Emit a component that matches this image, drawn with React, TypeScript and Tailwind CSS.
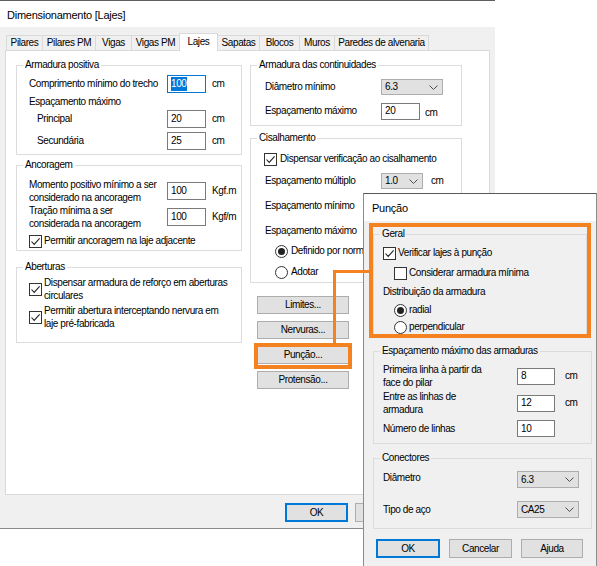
import type { ReactNode } from "react";
import clsx from "clsx";

function Box({ legend, className, children }: { legend: string; className?: string; children: ReactNode }) {
  return (
    <fieldset className={clsx("min-w-0 border border-[#dcdcdc]", className)}>
      <legend className="ml-[6px] px-[2px] leading-[14px]">{legend}</legend>
      {children}
    </fieldset>
  );
}

function Input({ value, w = "w-[39px]", h = "h-[18px]", focused }: { value: string; w?: string; h?: string; focused?: boolean }) {
  return (
    <div className={clsx("flex shrink-0 items-center border bg-white pl-[3px]", w, h, focused ? "border-[#0078d7]" : "border-[#7a7a7a]")}>
      {focused ? <span className="bg-[#0078d7] text-white">{value}</span> : value}
    </div>
  );
}

function Select({ value, w = "w-[62px]", h = "h-[17px]" }: { value: string; w?: string; h?: string }) {
  return (
    <div className={clsx("flex shrink-0 items-center justify-between border border-[#adadad] bg-[#e1e1e1] pl-[3px] pr-[4px]", w, h)}>
      <span>{value}</span>
      <svg width="9" height="5" viewBox="0 0 9 5">
        <path d="M0.5 0.5 L4.5 4.5 L8.5 0.5" fill="none" stroke="#505050" strokeWidth="1" />
      </svg>
    </div>
  );
}

function Check({ checked }: { checked?: boolean }) {
  return (
    <span className="flex h-[13px] w-[13px] shrink-0 items-center justify-center border border-[#333] bg-white">
      {checked && (
        <svg width="11" height="11" viewBox="0 0 11 11">
          <path d="M1.5 5.5 L4.2 8.4 L9.6 2.4" fill="none" stroke="#222" strokeWidth="1.1" />
        </svg>
      )}
    </span>
  );
}

function Radio({ checked }: { checked?: boolean }) {
  return (
    <span className="flex h-[13px] w-[13px] shrink-0 items-center justify-center rounded-full border border-[#333] bg-white">
      {checked && <span className="h-[7px] w-[7px] rounded-full bg-[#222]" />}
    </span>
  );
}

function Button({ label, w = "w-[92px]", h = "h-[18px]", primary }: { label?: string; w?: string; h?: string; primary?: boolean }) {
  return (
    <div
      className={clsx(
        "flex shrink-0 items-center justify-center bg-[#e1e1e1]",
        w,
        h,
        primary ? "border-2 border-[#0078d7]" : "border border-[#adadad]",
      )}
    >
      {label}
    </div>
  );
}

const TABS = [
  { nome: "Pilares", w: "w-[37px]" },
  { nome: "Pilares PM", w: "w-[54px]" },
  { nome: "Vigas", w: "w-[37px]" },
  { nome: "Vigas PM", w: "w-[49px]" },
  { nome: "Lajes", w: "w-[39px]", ativo: true },
  { nome: "Sapatas", w: "w-[43px]" },
  { nome: "Blocos", w: "w-[41px]" },
  { nome: "Muros", w: "w-[36px]" },
  { nome: "Paredes de alvenaria", w: "w-[95px]" },
];

function MainDialog() {
  return (
    <div className="flex h-[529px] w-[495px] flex-col border-b border-[#8a8a8a]">
      <div className="flex h-[27px] shrink-0 items-center border-t border-[#5f5f5f] bg-white pl-[7px] pt-[1px] text-[11px] tracking-[-0.25px]">
        Dimensionamento [Lajes]
      </div>
      <div className="flex flex-1 flex-col bg-[#f0f0f0] px-[5px] pt-[6px] pb-[6px]">
        <div className="flex h-[17px] items-end pl-[1px]">
          {TABS.map((t) => (
            <div
              key={t.nome}
              className={clsx(
                "-ml-px flex items-center justify-center border-x border-t border-[#d9d9d9] first:ml-0",
                t.w,
                t.ativo ? "relative z-10 -mb-px h-[18px] bg-white pb-[2px]" : "h-[15px] bg-[#f0f0f0]",
              )}
            >
              {t.nome}
            </div>
          ))}
        </div>
        <div className="flex h-[445px] gap-[8px] border border-[#d9d9d9] bg-white pl-[10px]">
          <div className="flex w-[226px] flex-col">
            <Box legend="Armadura positiva" className="mt-[7px]">
              <div className="pl-[12px] pt-[3px] pb-[4px]">
                <div className="flex h-[18px] items-center">
                  <span className="w-[138px]">Comprimento mínimo do trecho</span>
                  <Input value="100" focused />
                  <span className="ml-[6px]">cm</span>
                </div>
                <div className="mt-[2px] h-[14px] leading-[14px]">Espaçamento máximo</div>
                <div className="mt-[1px] flex h-[18px] items-center">
                  <span className="w-[138px] pl-[8px]">Principal</span>
                  <Input value="20" />
                  <span className="ml-[6px]">cm</span>
                </div>
                <div className="mt-[4px] flex h-[18px] items-center">
                  <span className="w-[138px] pl-[8px]">Secundária</span>
                  <Input value="25" />
                  <span className="ml-[6px]">cm</span>
                </div>
              </div>
            </Box>
            <Box legend="Ancoragem" className="mt-[3px]">
              <div className="pl-[12px] pt-[6px] pb-[2px]">
                <div className="flex h-[26px] items-center">
                  <span className="w-[138px] leading-[13px]">
                    Momento positivo mínimo a ser
                    <br />
                    considerado na ancoragem
                  </span>
                  <Input value="100" />
                  <span className="ml-[6px]">Kgf.m</span>
                </div>
                <div className="flex h-[26px] items-center">
                  <span className="w-[138px] leading-[13px]">
                    Tração mínima a ser
                    <br />
                    considerada na ancoragem
                  </span>
                  <Input value="100" />
                  <span className="ml-[6px]">Kgf/m</span>
                </div>
                <div className="mt-[4px] flex h-[14px] items-center gap-[2px]">
                  <Check checked />
                  <span>Permitir ancoragem na laje adjacente</span>
                </div>
              </div>
            </Box>
            <Box legend="Aberturas" className="mt-[9px]">
              <div className="pl-[12px] pt-[2px] pb-[12px]">
                <div className="flex h-[26px] items-center gap-[2px]">
                  <Check checked />
                  <span className="leading-[13px]">
                    Dispensar armadura de reforço em aberturas
                    <br />
                    circulares
                  </span>
                </div>
                <div className="mt-[2px] flex h-[26px] items-center gap-[2px]">
                  <Check checked />
                  <span className="leading-[13px]">
                    Permitir abertura interceptando nervura em
                    <br />
                    laje pré-fabricada
                  </span>
                </div>
              </div>
            </Box>
          </div>
          <div className="flex w-[212px] flex-col">
            <Box legend="Armadura das continuidades" className="mt-[7px]">
              <div className="pl-[14px] pt-[6px] pb-[5px]">
                <div className="flex h-[18px] items-center">
                  <span className="w-[116px]">Diâmetro mínimo</span>
                  <Select value="6.3" h="h-[16px]" />
                </div>
                <div className="mt-[6px] flex h-[18px] items-center">
                  <span className="w-[116px]">Espaçamento máximo</span>
                  <Input value="20" h="h-[17px]" />
                  <span className="ml-[5px] pt-[3px]">cm</span>
                </div>
              </div>
            </Box>
            <Box legend="Cisalhamento" className="mt-[5px]">
              <div className="pl-[14px] pt-[7px] pb-[3px]">
                <div className="-ml-px flex h-[14px] items-center gap-[3px]">
                  <Check checked />
                  <span>Dispensar verificação ao cisalhamento</span>
                </div>
                <div className="mt-[6px] flex h-[18px] items-center">
                  <span className="w-[116px]">Espaçamento múltiplo</span>
                  <Select value="1.0" w="w-[42px]" h="h-[16px]" />
                  <span className="ml-[8px]">cm</span>
                </div>
                {/* os campos destas linhas ficam sob a janela Punção */}
                <div className="mt-[7px] flex h-[18px] items-center">
                  <span className="w-[116px]">Espaçamento mínimo</span>
                </div>
                <div className="mt-[7px] flex h-[18px] items-center">
                  <span className="w-[116px]">Espaçamento máximo</span>
                </div>
                <div className="mt-[4px] flex h-[14px] items-center gap-[3px] pl-[10px]">
                  <Radio checked />
                  <span className="whitespace-nowrap">Definido por norma</span>
                </div>
                <div className="mt-[7px] flex h-[14px] items-center gap-[3px] pl-[10px]">
                  <Radio />
                  <span>Adotar</span>
                </div>
              </div>
            </Box>
            <div className="ml-[7px] mt-[13px] flex flex-col gap-[7px]">
              <Button label="Limites..." />
              <Button label="Nervuras..." />
              <Button label="Punção..." />
              <Button label="Protensão..." />
            </div>
          </div>
        </div>
        <div className="mt-[8px] flex justify-end gap-[7px] pr-[2px]">
          <Button label="OK" w="w-[63px]" h="h-[19px]" primary />
          <Button w="w-[63px]" h="h-[19px]" />
          <Button w="w-[63px]" h="h-[19px]" />
        </div>
      </div>
    </div>
  );
}

function PuncaoDialog() {
  return (
    <div className="absolute left-[363px] top-[193px] flex h-[374px] w-[234px] flex-col border border-[#8c8c8c] border-t-[#595959]">
      <div className="flex h-[27px] shrink-0 items-center bg-white pl-[8px] text-[11px] tracking-[-0.25px]">Punção</div>
      <div className="flex flex-1 flex-col bg-[#f0f0f0] pl-[9px]">
        <Box legend="Geral" className="mt-[6px] w-[214px]">
          <div className="pl-[9px] pt-[5px] pb-[2px]">
            <div className="flex h-[14px] items-center gap-[2px]">
              <Check checked />
              <span>Verificar lajes à punção</span>
            </div>
            <div className="mt-[6px] flex h-[14px] items-center gap-[2px] pl-[11px]">
              <Check />
              <span>Considerar armadura mínima</span>
            </div>
            <div className="mt-[5px] h-[14px] leading-[14px]">Distribuição da armadura</div>
            <div className="mt-[4px] flex h-[14px] items-center gap-[2px] pl-[11px]">
              <Radio checked />
              <span>radial</span>
            </div>
            <div className="mt-[3px] flex h-[14px] items-center gap-[2px] pl-[11px]">
              <Radio />
              <span>perpendicular</span>
            </div>
          </div>
        </Box>
        <Box legend="Espaçamento máximo das armaduras" className="mt-[7px] w-[219px]">
          <div className="pl-[9px] pt-[5px] pb-[5px]">
            <div className="flex h-[26px] items-center">
              <span className="w-[134px] leading-[13px]">
                Primeira linha à partir da
                <br />
                face do pilar
              </span>
              <Input value="8" w="w-[38px]" h="h-[17px]" />
              <span className="ml-[10px]">cm</span>
            </div>
            <div className="mt-[1px] flex h-[26px] items-center">
              <span className="w-[134px] leading-[13px]">
                Entre as linhas de
                <br />
                armadura
              </span>
              <Input value="12" w="w-[38px]" h="h-[17px]" />
              <span className="ml-[10px]">cm</span>
            </div>
            <div className="mt-[3px] flex h-[19px] items-center">
              <span className="w-[134px]">Número de linhas</span>
              <Input value="10" w="w-[38px]" h="h-[17px]" />
            </div>
          </div>
        </Box>
        <Box legend="Conectores" className="mt-[7px] w-[219px]">
          <div className="pl-[9px] pt-[5px] pb-[9px]">
            <div className="flex h-[19px] items-center">
              <span className="w-[134px] pb-[4px]">Diâmetro</span>
              <Select value="6.3" />
            </div>
            <div className="mt-[11px] flex h-[19px] items-center">
              <span className="w-[134px]">Tipo de aço</span>
              <Select value="CA25" />
            </div>
          </div>
        </Box>
        <div className="mt-[10px] flex gap-[9px] pl-[3px]">
          <Button label="OK" w="w-[64px]" h="h-[19px]" primary />
          <Button label="Cancelar" w="w-[63px]" h="h-[19px]" />
          <Button label="Ajuda" w="w-[62px]" h="h-[19px]" />
        </div>
      </div>
    </div>
  );
}

export default function App() {
  return (
    <div className="relative h-[566px] w-[597px] overflow-hidden bg-white font-['Liberation_Sans',Arial,sans-serif] text-[10px] leading-[14px] tracking-[-0.4px] text-black">
      <MainDialog />
      <PuncaoDialog />
      {/* destaque laranja: botão Punção ligado ao grupo Geral */}
      <div className="absolute left-[254px] top-[343px] h-[26px] w-[98px] border-[4px] border-[#f58220]" />
      <div className="absolute left-[333px] top-[270px] h-[74px] w-[3px] bg-[#f58220]" />
      <div className="absolute left-[333px] top-[270px] h-[3px] w-[37px] bg-[#f58220]" />
      <div className="absolute left-[369px] top-[223px] h-[115px] w-[222px] border-[4px] border-[#f58220]" />
    </div>
  );
}
